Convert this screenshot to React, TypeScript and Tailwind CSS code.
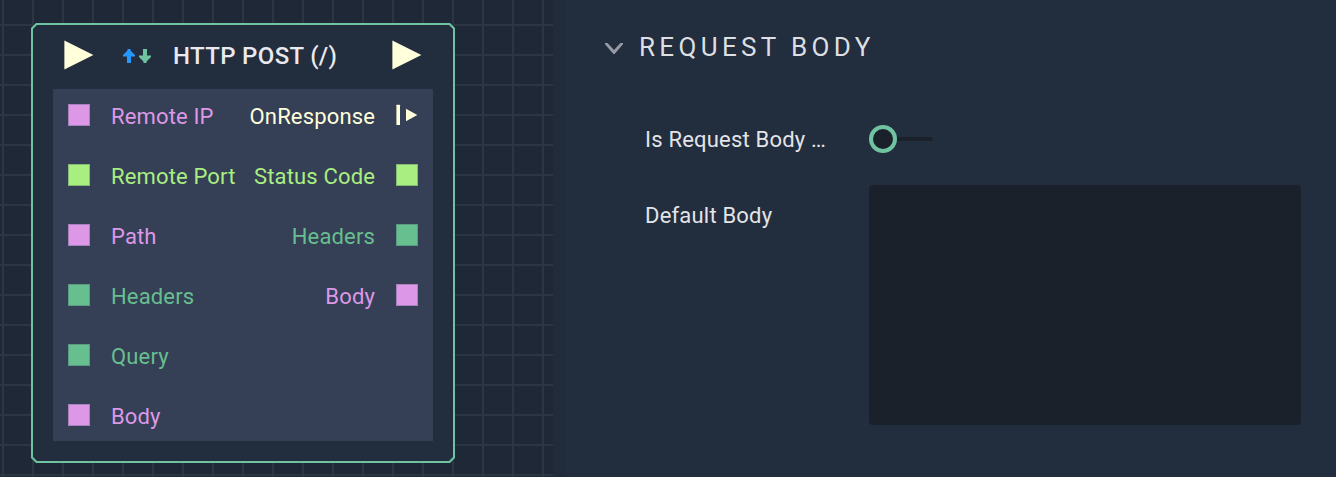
import React from "react";

type Port = { label: string; color: "pink" | "lime" | "green" | "exec" };

const textColor = {
  pink: "text-[#dc98e6]",
  lime: "text-[#a9ee81]",
  green: "text-[#67bf8f]",
  exec: "text-[#ffffdc]",
};
const boxColor = {
  pink: "bg-[#dc98e6] border-[#a880bc]",
  lime: "bg-[#a9ee81] border-[#86ba77]",
  green: "bg-[#67bf8f] border-[#599a81]",
  exec: "",
};

const inputs: Port[] = [
  { label: "Remote IP", color: "pink" },
  { label: "Remote Port", color: "lime" },
  { label: "Path", color: "pink" },
  { label: "Headers", color: "green" },
  { label: "Query", color: "green" },
  { label: "Body", color: "pink" },
];
const outputs: Port[] = [
  { label: "OnResponse", color: "exec" },
  { label: "Status Code", color: "lime" },
  { label: "Headers", color: "green" },
  { label: "Body", color: "pink" },
];

function Socket({ color }: { color: Port["color"] }) {
  if (color === "exec") {
    return (
      <svg className="h-[22px] w-[22px]" viewBox="0 0 22 22" fill="#ffffdc">
        <rect x="0.4" y="0.8" width="3.6" height="20.2" rx="0.5" />
        <path d="M10 4.8v12.4l11.3-6.2z" />
      </svg>
    );
  }
  return <span className={`block h-[22px] w-[22px] border ${boxColor[color]}`} />;
}

function ExecArrow() {
  return (
    <svg className="h-[30px] w-[30px]" viewBox="0 0 30 30" fill="#ffffdc">
      <path d="M0.4 0.5v29L29.4 15z" />
    </svg>
  );
}

function Node() {
  return (
    <section className="h-[440px] w-[424px] bg-[#6fc3a0] p-[2px] [clip-path:polygon(5px_0,calc(100%-5px)_0,100%_5px,100%_calc(100%-5px),calc(100%-5px)_100%,5px_100%,0_calc(100%-5px),0_5px)]">
      <div className="h-full bg-[#222d3d] px-5 [clip-path:polygon(4px_0,calc(100%-4px)_0,100%_4px,100%_calc(100%-4px),calc(100%-4px)_100%,4px_100%,0_calc(100%-4px),0_4px)]">
        <header className="flex h-16 items-center pb-1 pl-[11px] pr-[11px]">
          <ExecArrow />
          <svg className="ml-[29px] mt-[2px] h-[14px] w-7" viewBox="0 0 28 14">
            <path d="M4.5 0h3v1.5L12 6v1.6H8V14H4V7.6H0V6l4.5-4.5z" fill="#2498ff" />
            <path d="M20 0h4v6.4h4V8l-4.5 4.5V14h-3v-1.5L16 8V6.4h4z" fill="#6fc3a0" />
          </svg>
          <h1 className="ml-[22px] mt-[2px] text-[24px] leading-7 font-medium tracking-[0.34px] whitespace-nowrap text-[#e9e9ef]">HTTP POST (/)</h1>
          <span className="ml-auto"><ExecArrow /></span>
        </header>
        <div className="flex h-[352px] justify-between bg-[#354056] px-[15px] text-[22px] leading-[26px]">
          <ul className="flex flex-col gap-2">
            {inputs.map((p) => (
              <li key={p.label} className="flex h-[52px] items-center gap-[21px]">
                <Socket color={p.color} />
                <span className={`pt-[3px] whitespace-nowrap tracking-[0.15px] ${textColor[p.color]}`}>{p.label}</span>
              </li>
            ))}
          </ul>
          <ul className="flex flex-col gap-2">
            {outputs.map((p) => (
              <li key={p.label} className="flex h-[52px] items-center justify-end gap-[21px]">
                <span className={`pt-[3px] whitespace-nowrap tracking-[0.15px] ${textColor[p.color]}`}>{p.label}</span>
                <Socket color={p.color} />
              </li>
            ))}
          </ul>
        </div>
      </div>
    </section>
  );
}

export default function App() {
  return (
    <main className="flex h-[477px] w-[1336px] overflow-hidden bg-[#222d3d] font-['Roboto',sans-serif]">
      <div className="w-[553px] shrink-0 bg-[#1f2837] bg-[linear-gradient(to_right,#2b3643_2px,transparent_2px),linear-gradient(to_bottom,#2b3643_2px,transparent_2px)] bg-[size:30px_30px] bg-[position:2px_0,0_24px] pl-[31px] pt-[23px]">
        <Node />
      </div>
      <aside className="flex-1 border-l-[12px] border-[#222b3b] pl-10">
        <header className="flex h-[94px] items-center">
          <svg className="mt-[2px] h-[13px] w-[19px]" viewBox="0 0 19 13" fill="#9799a5">
            <path d="M0 1h2.6L9 8l6.4-7H18v1.3L9.6 12H8.4L0 2.3z" />
          </svg>
          <h2 className="ml-[15px] text-[26px] leading-8 tracking-[4.35px] text-[#dddfe3]">REQUEST BODY</h2>
        </header>
        <div className="flex h-[91px] items-center pl-10 text-[22px] leading-[26px] text-[#e3e4e8]">
          <span className="w-56 tracking-[0.2px]">Is Request Body <span className="tracking-[-1.2px]">...</span></span>
          <div className="flex items-center pb-[2px]">
            <span className="h-7 w-7 rounded-full border-4 border-[#6fc3a0] bg-[#1a212a]" />
            <span className="h-1 w-9 rounded-r-full bg-[#1a212a]" />
          </div>
        </div>
        <div className="flex pl-10 text-[22px] leading-[26px] text-[#e3e4e8]">
          <span className="w-56 pt-[18px] tracking-[0.2px]">Default Body</span>
          <div className="h-60 w-[432px] rounded-[4px] bg-[#1a212a]" />
        </div>
      </aside>
    </main>
  );
}
